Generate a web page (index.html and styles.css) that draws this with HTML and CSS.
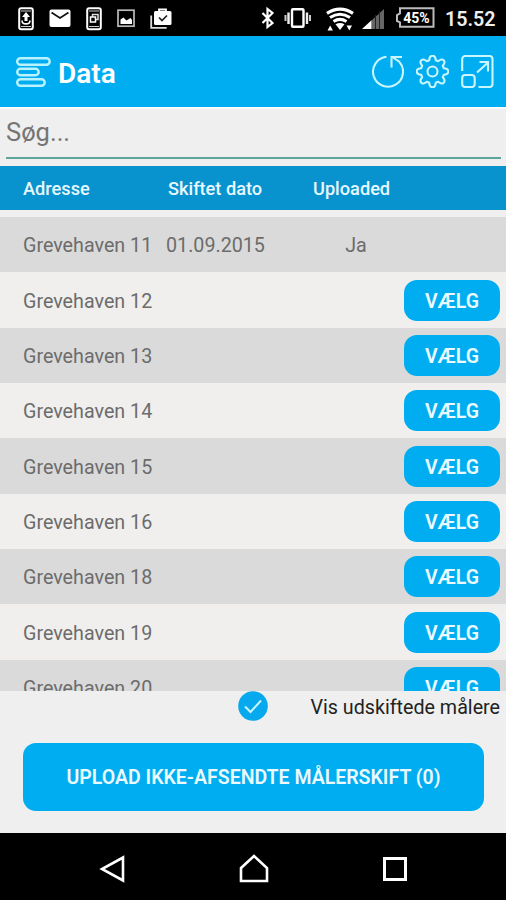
FILE: index.html
```
<!DOCTYPE html>
<html lang="da">
<head>
    <meta charset="UTF-8">
    <title>Data</title>
    <link rel="stylesheet" href="styles.css">
</head>
<body>
<div class="statusbar">
    <div class="notifications">
        <svg width="16" height="36" viewBox="0 0 16 36"><rect x="1.2" y="8.2" width="13.6" height="21" rx="2" fill="none" stroke="#fff" stroke-width="2"/><path d="M3 11h10M3 26.5h10" stroke="#ccc" stroke-width="1.2"/><path d="M8 12l4 5H9.5v4h-3v-4H4z" fill="#fff"/><path d="M4 20.5c0 4.5 8 4.5 8 0" fill="none" stroke="#fff" stroke-width="1.6"/></svg>
        <svg width="22" height="36" viewBox="0 0 22 36"><rect x="0.5" y="9.5" width="21" height="17.5" rx="2" fill="#fff"/><path d="M2.5 12.5l8.5 5.5 8.5-5.5" fill="none" stroke="#111" stroke-width="1.7"/></svg>
        <svg width="16" height="36" viewBox="0 0 16 36"><rect x="1.2" y="8.2" width="13.6" height="21" rx="2" fill="none" stroke="#fff" stroke-width="2"/><path d="M3 11h10M3 26.5h10" stroke="#ccc" stroke-width="1.2"/><path d="M6.5 17v-2.5h5.5v5H9.5" fill="none" stroke="#ddd" stroke-width="1.5"/><rect x="4.5" y="17" width="5" height="5" fill="none" stroke="#fff" stroke-width="1.5"/></svg>
        <svg width="18" height="36" viewBox="0 0 18 36"><rect x="1" y="10.2" width="16" height="16" fill="none" stroke="#bbb" stroke-width="1.7"/><path d="M3.5 24v-4.5l3-2 3 3 4-2.5 1.5 2v4z" fill="#fff"/></svg>
        <svg width="22" height="36" viewBox="0 0 22 36"><path d="M1.2 15.5v12.3h15.5" fill="none" stroke="#ddd" stroke-width="1.8"/><path d="M9 11.5V9.5h7v2" fill="none" stroke="#fff" stroke-width="1.8"/><rect x="4" y="11" width="17.5" height="14" rx="1.5" fill="#fff"/><path d="M9 17.5l3 3 5-5" fill="none" stroke="#222" stroke-width="1.7"/></svg>
    </div>
    <div class="system">
        <svg class="bluetooth" width="13" height="36" viewBox="0 0 13 36"><path d="M1.5 13l10 10-5 4V9l5 4-10 10" fill="none" stroke="#fff" stroke-width="2.2"/></svg>
        <svg class="vibrate" width="28" height="36" viewBox="0 0 28 36"><rect x="8" y="9.2" width="11.5" height="17.6" rx="1" fill="none" stroke="#fff" stroke-width="2.4"/><path d="M4.5 12.5v11.5M23 12.5v11.5" stroke="#eee" stroke-width="2.4"/><path d="M1.5 15v6M26 15v6" stroke="#ccc" stroke-width="2"/></svg>
        <svg class="wifi" width="28" height="36" viewBox="0 0 28 36"><g fill="none" stroke="#fff" stroke-width="3.2"><path d="M1 13.3Q14 5 27 13.3"/><path d="M4 17.5Q14 11 24 17.5"/><path d="M7.5 21.5Q14 17.3 20.5 21.5"/></g><path d="M9.5 24.3Q14 21.6 18.5 24.3L14 30zM1.5 30.5l2.7-5 2.7 5zM20.5 25.5h5.5l-2.7 5z" fill="#fff"/></svg>
        <svg class="signal" width="22" height="36" viewBox="0 0 22 36"><path d="M22 9v20H9.5V20.5z" fill="#666"/><path d="M9.5 20.3V29H0z" fill="#fff"/><path d="M13.5 15v14M17.5 11v18" stroke="#222" stroke-width="1"/></svg>
        <svg class="battery" width="40" height="36" viewBox="0 0 40 36"><path d="M5 8.2h33.5v18.6H5v-4.5L2 21v-6l3-1.5z" fill="none" stroke="#bbb" stroke-width="2"/><text x="21.5" y="23" text-anchor="middle">45%</text></svg>
        <span class="clock">15.52</span>
    </div>
</div>

<div class="header">
    <svg class="menu" width="35" height="30" viewBox="0 0 35 30"><g fill="none" stroke="#b9f3ff" stroke-width="2.4"><rect x="1.2" y="1.2" width="32.5" height="6.6" rx="3.3"/><rect x="1.2" y="11.8" width="21.5" height="6.4" rx="3.2"/><rect x="1.2" y="22.2" width="27.5" height="6.6" rx="3.3"/></g></svg>
    <h1>Data</h1>
    <div class="actions">
        <svg width="33" height="33" viewBox="0 0 33 33"><g fill="none" stroke="#c9f5ff" stroke-width="2.1"><path d="M15.5 1.8A15 15 0 1 0 28 6.5L22 2.5"/><path d="M31 2H20.5v10.5"/></g></svg>
        <svg width="33" height="33" viewBox="0 0 33 33"><g fill="none" stroke="#c9f5ff" stroke-width="2.1" stroke-linejoin="round"><circle cx="16.5" cy="16.5" r="5"/><path d="M13.25 5.16C13.7-.8 19.3-.8 19.75 5.16L22.22 6.18C26.75 2.29 30.71 6.25 26.82 10.78L27.84 13.25C33.8 13.7 33.8 19.3 27.84 19.75L26.82 22.22C30.71 26.75 26.75 30.71 22.22 26.82L19.75 27.84C19.3 33.8 13.7 33.8 13.25 27.84L10.78 26.82C6.25 30.71 2.29 26.75 6.18 22.22L5.16 19.75C-.8 19.3-.8 13.7 5.16 13.25L6.18 10.78C2.29 6.25 6.25 2.29 10.78 6.18z"/></g></svg>
        <svg width="33" height="33" viewBox="0 0 33 33"><g fill="none" stroke="#c9f5ff" stroke-width="2.1"><path d="M1.2 16V4a3 3 0 0 1 3-3H28.5a3 3 0 0 1 3 3v25a3 3 0 0 1-3 3H17.5"/><rect x="1.2" y="20" width="12.5" height="12" rx="3"/><path d="M16 17.5L27 7.5M18.5 7H27v9.5"/></g></svg>
    </div>
</div>

<div class="search">
    <input type="text" placeholder="Søg...">
</div>

<div class="row thead">
    <span>Adresse</span>
    <span>Skiftet dato</span>
    <span>Uploaded</span>
</div>

<div class="list">
    <div class="row"><span>Grevehaven 11</span><span class="date">01.09.2015</span><span class="uploaded">Ja</span></div>
    <div class="row"><span>Grevehaven 12</span><button class="btn">VÆLG</button></div>
    <div class="row"><span>Grevehaven 13</span><button class="btn">VÆLG</button></div>
    <div class="row"><span>Grevehaven 14</span><button class="btn">VÆLG</button></div>
    <div class="row"><span>Grevehaven 15</span><button class="btn">VÆLG</button></div>
    <div class="row"><span>Grevehaven 16</span><button class="btn">VÆLG</button></div>
    <div class="row"><span>Grevehaven 18</span><button class="btn">VÆLG</button></div>
    <div class="row"><span>Grevehaven 19</span><button class="btn">VÆLG</button></div>
    <div class="row"><span>Grevehaven 20</span><button class="btn">VÆLG</button></div>
</div>

<div class="footer">
    <div class="filter">
        <svg width="30" height="30" viewBox="0 0 30 30"><circle cx="15" cy="15" r="14.8" fill="#06a9ee"/><path d="M7 15.5l5.5 5.5 10.5-11.5" fill="none" stroke="#c9f5ff" stroke-width="2"/></svg>
        <span>Vis udskiftede målere</span>
    </div>
    <button class="upload">UPLOAD IKKE-AFSENDTE MÅLERSKIFT (0)</button>
</div>

<div class="navbar">
    <svg width="30" height="30" viewBox="0 0 30 30"><path d="M25 3.5v23L4 15z" fill="none" stroke="#fff" stroke-width="2.6"/></svg>
    <svg width="30" height="30" viewBox="0 0 30 30"><path d="M2 14L15 2l13 12v13H2z" fill="none" stroke="#fff" stroke-width="2.6"/></svg>
    <svg width="30" height="30" viewBox="0 0 30 30"><rect x="4.5" y="4.5" width="21" height="21" fill="none" stroke="#fff" stroke-width="3"/></svg>
</div>
</body>
</html>
```
FILE: styles.css
```
*{
    box-sizing: border-box;
}
body{
    margin: 0;
    width: 506px;
    height: 900px;
    overflow: hidden;
    display: flex;
    flex-direction: column;
    background-color: #efefef;
    font-family: Roboto, "Liberation Sans", sans-serif;
}
svg{
    display: block;
    flex: none;
}
.statusbar{
    height: 36px;
    flex: none;
    display: flex;
    justify-content: space-between;
    padding: 0 11px 0 18px;
    background-color: #000;
}
.notifications{
    display: flex;
    gap: 15px;
}
.system{
    display: flex;
}
.vibrate{
    margin-left: 10px;
}
.wifi{
    margin-left: 14px;
}
.signal{
    margin-left: 8px;
}
.battery{
    margin-left: 11px;
}
.battery text{
    fill: #fff;
    font-size: 14px;
    font-weight: bold;
}
.clock{
    width: 50px;
    margin-left: 10px;
    line-height: 39px;
    font-size: 19.7px;
    font-weight: 600;
    color: #eee;
}
.header{
    height: 71px;
    flex: none;
    display: flex;
    align-items: center;
    padding: 0 12px 0 16px;
    background-color: #00adf0;
}
.header h1{
    margin: 3px 0 0 7px;
    font-size: 28px;
    font-weight: 600;
    color: #fff;
}
.actions{
    display: flex;
    gap: 12px;
    margin-left: auto;
}
.search{
    height: 58.5px;
    flex: none;
    padding: 1px 5px 0 6px;
    border-top: 2px solid #fafafa;
}
.search input{
    width: 100%;
    height: 49px;
    padding: 0 0 3px;
    border: none;
    border-bottom: 2px solid #5fa69a;
    outline: none;
    background: none;
    font-family: inherit;
    font-size: 25.5px;
}
.search input::placeholder{
    color: #757575;
}
.row{
    height: 55.35px;
    flex: none;
    display: grid;
    grid-template-columns: 145px 145px 86px 1fr;
    align-items: center;
    padding: 0 6px 0 23px;
    font-size: 19.7px;
    color: #6c6c6c;
    background-color: #f0efed;
    white-space: nowrap;
}
.row:nth-child(odd){
    background-color: #dadada;
}
.row.thead{
    height: 44px;
    padding-top: 1px;
    font-size: 18.2px;
    font-weight: 500;
    color: #e8f8ff;
    background-color: #0893ce;
}
.list{
    height: 481.5px;
    flex: none;
    padding-top: 7.5px;
    overflow: hidden;
}
.list .row span{
    padding-top: 2px;
}
.date{
    margin-left: -2px;
}
.uploaded{
    text-align: center;
}
.btn{
    grid-column: 4;
    justify-self: end;
    width: 96px;
    height: 41px;
    padding: 2px 0 0;
    border: none;
    border-radius: 13px;
    background-color: #00adf0;
    font-family: inherit;
    font-size: 19.5px;
    font-weight: 600;
    color: #eafaff;
}
.footer{
    height: 142px;
    flex: none;
}
.filter{
    height: 30px;
    display: flex;
    align-items: center;
    justify-content: flex-end;
    gap: 42px;
    padding: 0 6px 0 0;
    font-size: 19.7px;
    color: #222;
    white-space: nowrap;
}
.filter span{
    padding-top: 2px;
}
.upload{
    display: block;
    width: 461px;
    height: 68px;
    margin: 22px 0 0 23px;
    padding: 1px 0 0;
    border: none;
    border-radius: 13px;
    background-color: #00adf0;
    font-family: inherit;
    font-size: 19.5px;
    font-weight: 600;
    color: #eafaff;
    white-space: nowrap;
}
.navbar{
    flex: 1;
    display: flex;
    align-items: center;
    justify-content: center;
    gap: 111px;
    padding: 4px 0 0 1px;
    background-color: #000;
}
```
